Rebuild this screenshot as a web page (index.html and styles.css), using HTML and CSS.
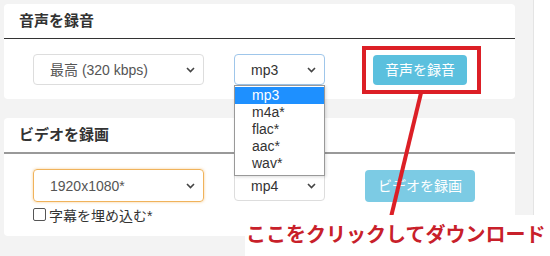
FILE: index.html
```html
<!DOCTYPE html>
<html>
<head>
<meta charset="utf-8">
<link rel="stylesheet" href="styles.css">
</head>
<body>
<div class="page">
  <div class="card">
    <div class="card-head dark">音声を録音</div>
    <div class="card-body">
      <div class="row">
        <div class="select wide">最高 (320 kbps)<svg class="chev" width="9" height="6" viewBox="0 0 9 6"><path d="M1 1l3.5 3.5L8 1" fill="none" stroke="#444" stroke-width="1.6"/></svg></div>
        <div class="select narrow focus-blue">mp3<svg class="chev" width="9" height="6" viewBox="0 0 9 6"><path d="M1 1l3.5 3.5L8 1" fill="none" stroke="#444" stroke-width="1.6"/></svg></div>
        <div class="btn-col"><div class="btn">音声を録音</div></div>
      </div>
    </div>
  </div>
  <div class="card second">
    <div class="card-head grey">ビデオを録画</div>
    <div class="card-body">
      <div class="row">
        <div class="select wide focus-orange">1920x1080*<svg class="chev" width="9" height="6" viewBox="0 0 9 6"><path d="M1 1l3.5 3.5L8 1" fill="none" stroke="#444" stroke-width="1.6"/></svg></div>
        <div class="select narrow">mp4<svg class="chev" width="9" height="6" viewBox="0 0 9 6"><path d="M1 1l3.5 3.5L8 1" fill="none" stroke="#444" stroke-width="1.6"/></svg></div>
        <div class="btn-col"><div class="btn faded">ビデオを録画</div></div>
      </div>
      <label class="check"><span class="box"></span>字幕を埋め込む*</label>
    </div>
  </div>
</div>

<ul class="options">
  <li class="picked">mp3</li>
  <li>m4a*</li>
  <li>flac*</li>
  <li>aac*</li>
  <li>wav*</li>
</ul>

<svg class="marks" width="550" height="256" viewBox="0 0 550 256">
  <rect x="364" y="48" width="115" height="44" fill="none" stroke="#dc1f26" stroke-width="4"/>
  <path d="M421 93L391 217" stroke="#dc1f26" stroke-width="4"/>
</svg>

<div class="caption">ここをクリックしてダウンロード</div>
</body>
</html>
```

FILE: styles.css
```css
body {
  margin: 0;
  background: #fff;
  font-family: "Liberation Sans", "Noto Sans CJK JP", sans-serif;
  font-size: 14px;
  color: #333;
}

.page {
  width: 525px;
  height: 256px;
  padding: 4px;
  background: #f3f3f3;
  border-right: 1px solid #e4e4e4;
  box-sizing: border-box;
  width: 534px;
}

.card {
  width: 511px;
  background: #fff;
  border-radius: 4px;
}

.card.second {
  margin-top: 19px;
}

.card-head {
  height: 34px;
  line-height: 33px;
  padding-left: 15px;
  font-size: 15px;
  font-weight: bold;
  box-sizing: border-box;
}

.card-head.dark {
  border-bottom: 1px solid #333;
  height: 35px;
}

.card-head.grey {
  border-bottom: 2px solid #999;
  height: 36px;
}

.card-body {
  padding: 15px 0 14px 29px;
}

.card.second .card-body {
  padding-top: 15px;
  padding-bottom: 14px;
}

.row {
  display: flex;
  align-items: center;
}

.select {
  position: relative;
  height: 31px;
  line-height: 30px;
  padding-left: 16px;
  border: 1px solid #ddd;
  border-radius: 4px;
  color: #555;
  box-sizing: border-box;
}

.select.wide {
  width: 171px;
}

.select.narrow {
  width: 91px;
  margin-left: 30px;
  color: #333;
}

.focus-blue {
  border-color: #9fc6ea;
}

.focus-orange {
  height: 33px;
  line-height: 32px;
  border-color: #f0b35b;
  box-shadow: 0 0 3px rgba(240, 173, 78, 0.6);
}

.chev {
  position: absolute;
  right: 8px;
  top: 12px;
}

.focus-orange .chev {
  top: 13px;
}

.btn-col {
  flex: 1;
  display: flex;
  justify-content: center;
}

.btn {
  height: 30px;
  line-height: 30px;
  padding: 0 12px;
  background: #5bc0de;
  color: #fff;
  border-radius: 4px;
}

.btn.faded {
  height: 32px;
  line-height: 32px;
  background: #7ccbe4;
  padding: 0 13px;
}

.check {
  display: flex;
  align-items: center;
  margin-top: 5px;
  height: 15px;
}

.box {
  width: 11px;
  height: 11px;
  border: 1px solid #555;
  border-radius: 2px;
  margin-right: 3px;
}

.options {
  position: absolute;
  left: 234px;
  top: 85px;
  width: 91px;
  margin: 0;
  padding: 1px 0 3px;
  list-style: none;
  background: #fff;
  border: 1px solid #999;
  box-sizing: border-box;
  box-shadow: 1px 1px 3px rgba(0, 0, 0, 0.15);
}

.options li {
  height: 17px;
  line-height: 17px;
  padding-left: 17px;
  color: #333;
}

.options li.picked {
  background: #1e90ff;
  color: #fff;
}

.marks {
  position: absolute;
  left: 0;
  top: 0;
}

.caption {
  position: absolute;
  left: 245px;
  top: 215px;
  right: 0;
  bottom: 0;
  padding: 5px 0 0 1px;
  background: #fff;
  color: #c8202a;
  font-family: "Noto Sans CJK JP", sans-serif;
  font-size: 20px;
  font-weight: bold;
  line-height: 28px;
  white-space: nowrap;
}
```
